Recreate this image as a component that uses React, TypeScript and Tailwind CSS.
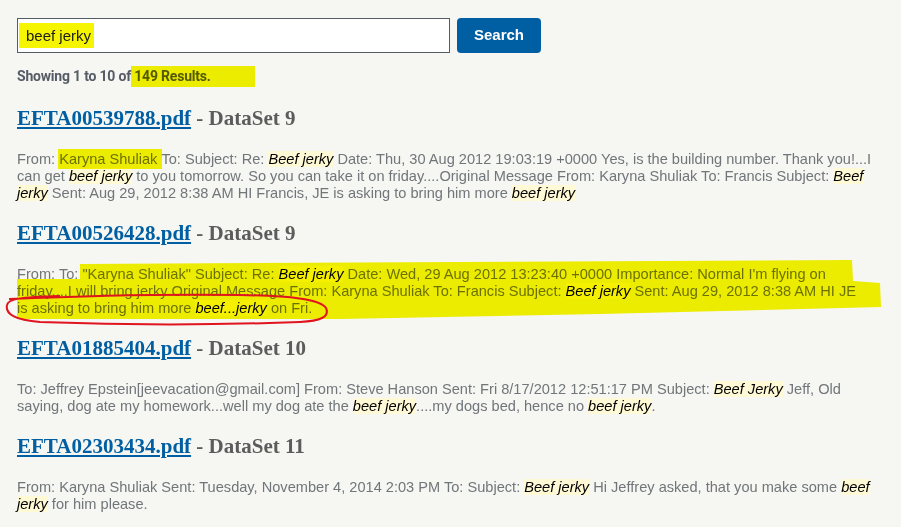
import React from 'react';

type Piece = string | { hit: string };

type Result = {
  file: string;
  set: string;
  lines: Piece[][];
};

const results: Result[] = [
  {
    file: 'EFTA00539788.pdf',
    set: 'DataSet 9',
    lines: [
      ['From: ', '@Karyna Shuliak ', 'To: Subject: Re: ', { hit: 'Beef jerky' }, ' Date: Thu, 30 Aug 2012 19:03:19 +0000 Yes, is the building number. Thank you!...I'],
      ['can get ', { hit: 'beef jerky' }, ' to you tomorrow. So you can take it on friday....Original Message From: Karyna Shuliak To: Francis Subject: ', { hit: 'Beef' }],
      [{ hit: 'jerky' }, ' Sent: Aug 29, 2012 8:38 AM HI Francis, JE is asking to bring him more ', { hit: 'beef jerky' }],
    ],
  },
  {
    file: 'EFTA00526428.pdf',
    set: 'DataSet 9',
    lines: [
      ['From: To: "Karyna Shuliak" Subject: Re: ', { hit: 'Beef jerky' }, " Date: Wed, 29 Aug 2012 13:23:40 +0000 Importance: Normal I'm flying on"],
      ['friday....I will bring jerky Original Message From: Karyna Shuliak To: Francis Subject: ', { hit: 'Beef jerky' }, ' Sent: Aug 29, 2012 8:38 AM HI JE'],
      ['is asking to bring him more ', { hit: 'beef...jerky' }, ' on Fri.'],
    ],
  },
  {
    file: 'EFTA01885404.pdf',
    set: 'DataSet 10',
    lines: [
      ['To: Jeffrey Epstein[jeevacation@gmail.com] From: Steve Hanson Sent: Fri 8/17/2012 12:51:17 PM Subject: ', { hit: 'Beef Jerky' }, ' Jeff, Old'],
      ['saying, dog ate my homework...well my dog ate the ', { hit: 'beef jerky' }, '....my dogs bed, hence no ', { hit: 'beef jerky' }, '.'],
    ],
  },
  {
    file: 'EFTA02303434.pdf',
    set: 'DataSet 11',
    lines: [
      ['From: Karyna Shuliak Sent: Tuesday, November 4, 2014 2:03 PM To: Subject: ', { hit: 'Beef jerky' }, ' Hi Jeffrey asked, that you make some ', { hit: 'beef' }],
      [{ hit: 'jerky' }, ' for him please.'],
    ],
  },
];

// marker pen over the text, like a hand annotation
const marker =
  "relative after:absolute after:inset-x-[-1px] after:top-[-2px] after:bottom-[-2px] after:bg-[#f5f500] after:mix-blend-multiply after:content-['']";

function Line({ pieces }: { pieces: Piece[] }) {
  return (
    <div className="whitespace-pre">
      {pieces.map((p, i) => {
        if (typeof p !== 'string')
          return (
            <mark key={i} className="bg-[#fff9d6] text-black italic">
              {p.hit}
            </mark>
          );
        if (p.startsWith('@'))
          return (
            <span key={i} className={marker}>
              {p.slice(1)}
            </span>
          );
        return <span key={i}>{p}</span>;
      })}
    </div>
  );
}

function Scribble() {
  return (
    <>
      <svg
        className="absolute left-[-17px] top-0 pointer-events-none overflow-visible mix-blend-multiply"
        width="900"
        height="60"
      >
        <path
          d="M80 -2 L852 -6 L853 15 L880 17 L881 41 L600 48 L340 53 L17 53 L17 13 L80 13 Z"
          fill="#f5f500"
        />
      </svg>
      <svg
        className="absolute left-[-17px] top-0 pointer-events-none overflow-visible"
        width="900"
        height="60"
      >
        <path
          d="M9 33 C80 30 180 28 240 29 C290 30 320 33 326 42 C330 51 320 55 300 56 C220 59 120 59 40 56 C15 54 5 48 7 39 C8 33 20 31 60 30"
          fill="none"
          stroke="#e0141e"
          strokeWidth="2"
        />
      </svg>
    </>
  );
}

function ResultItem({ item, marked }: { item: Result; marked?: boolean }) {
  return (
    <div className="mt-[17px] first:mt-[18px]">
      <h2 className="text-[21px] leading-[28px] font-bold font-['Liberation_Serif',serif] text-[#5c5c5c]">
        <a href="#" className="text-[#005ea2] underline decoration-2 underline-offset-2">
          {item.file}
        </a>{' '}
        - {item.set}
      </h2>
      <div className="relative mt-[19px] text-[14.6px] leading-[17px] text-[#71767a]">
        {item.lines.map((l, i) => (
          <Line key={i} pieces={l} />
        ))}
        {marked && <Scribble />}
      </div>
    </div>
  );
}

export default function App() {
  return (
    <div className="min-h-screen bg-[#f6f6f2] px-[17px] pt-[18px] font-['Liberation_Sans',Arial,sans-serif]">
      <form className="flex gap-[7px]" onSubmit={e => e.preventDefault()}>
        <div className="w-[433px] h-[35px] border border-[#565c65] bg-white flex items-center px-px">
          <span className="bg-[#f5f500] text-[15px] text-[#1b1b1b] pl-[7px] pr-[3px] py-[3px] leading-[19px]">
            beef jerky
          </span>
        </div>
        <button className="w-[84px] h-[35px] rounded-[4px] bg-[#005ea2] text-white font-bold text-[15px]">
          Search
        </button>
      </form>
      <p className="mt-[13px] text-[14px] tracking-[-0.2px] leading-[20px] font-bold font-['Roboto',sans-serif] text-[#565c65]">
        Showing 1 to 10 of{' '}
        <span className="relative after:absolute after:left-[-3px] after:right-[-44px] after:top-[-2px] after:bottom-[-3px] after:bg-[#f5f500] after:mix-blend-multiply after:content-['']">
          149 Results.
        </span>
      </p>
      <div className="w-[866px]">
        {results.map((r, i) => (
          <ResultItem key={r.file} item={r} marked={i === 1} />
        ))}
      </div>
    </div>
  );
}
